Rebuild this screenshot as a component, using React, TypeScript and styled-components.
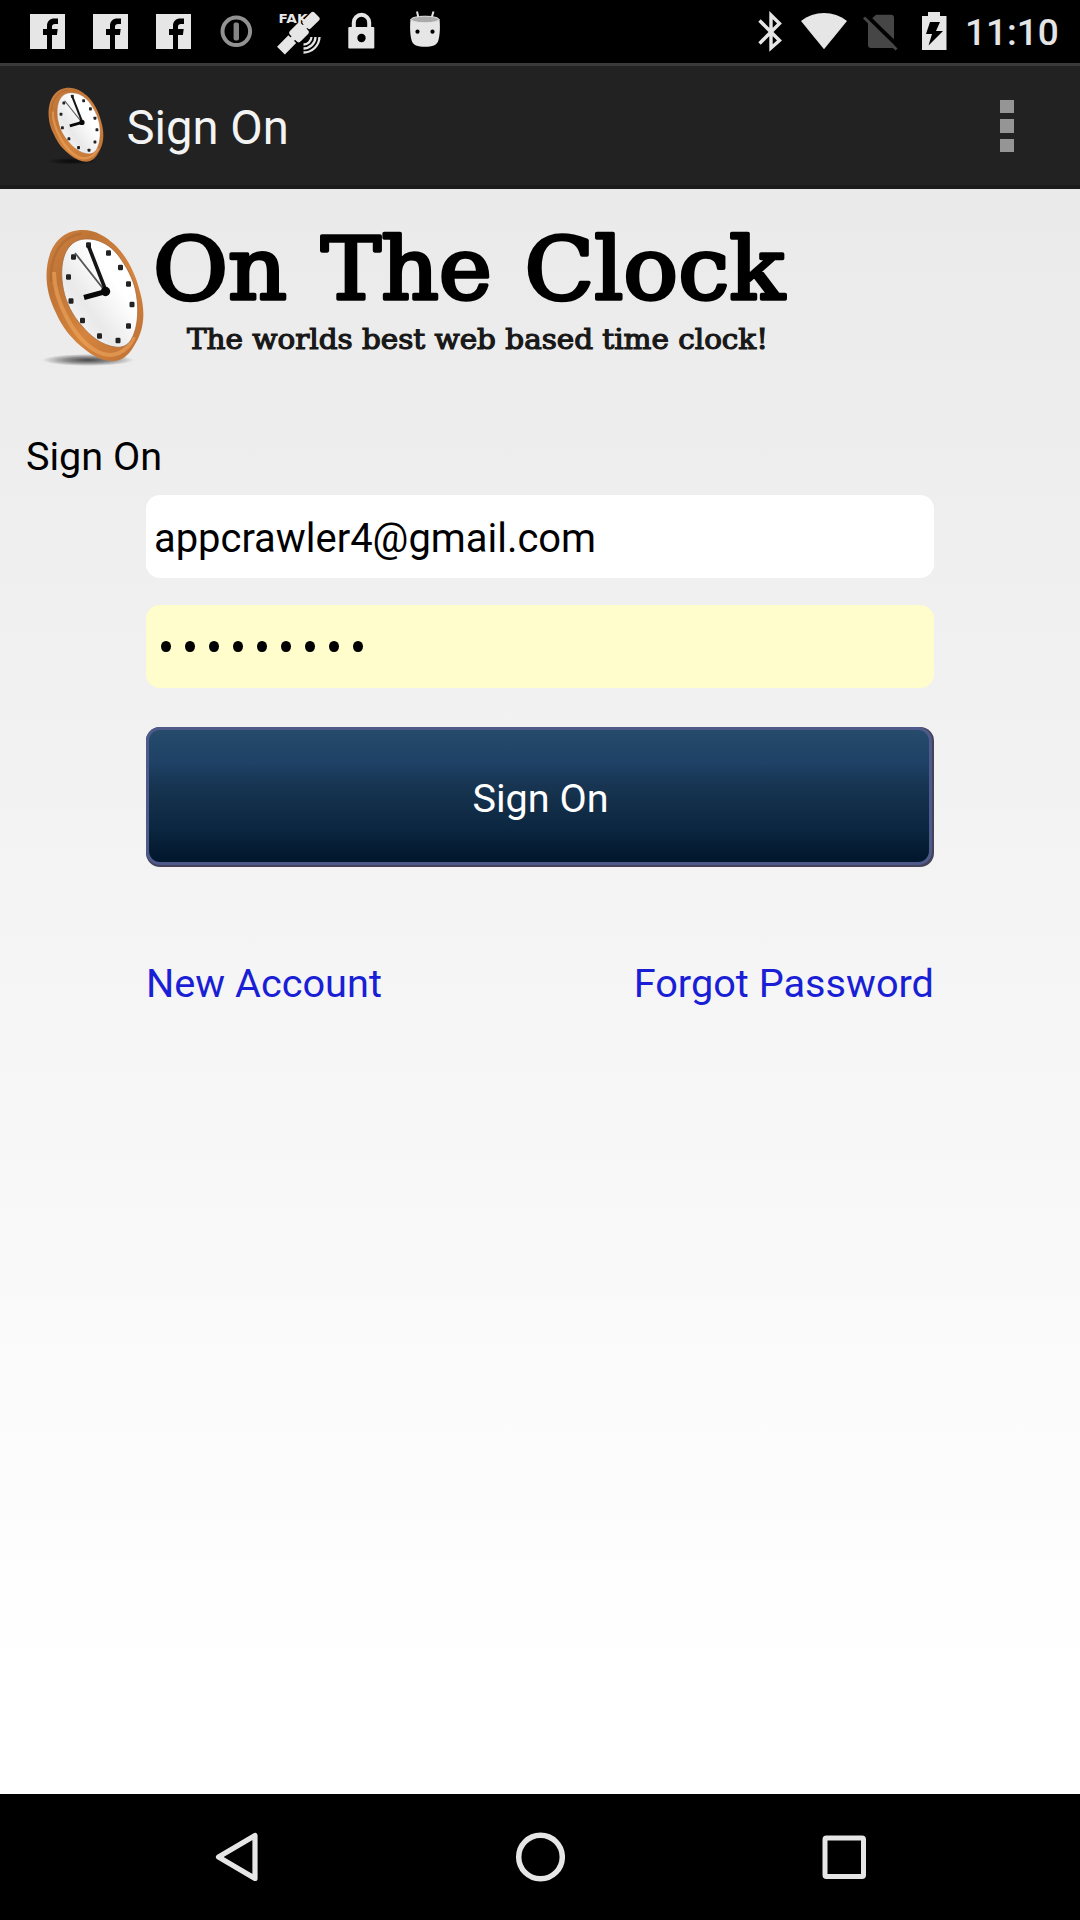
import React from "react";
import styled, { createGlobalStyle } from "styled-components";

const GlobalStyle = createGlobalStyle`
  * { box-sizing: border-box; }
  html, body { margin: 0; padding: 0; }
  body { font-family: Roboto, "Noto Sans", sans-serif; background: #000; }
`;

const Screen = styled.div`
  width: 1080px;
  height: 1920px;
  display: flex;
  flex-direction: column;
  overflow: hidden;
`;

const StatusBar = styled.header`
  height: 63px;
  flex: none;
  display: flex;
  justify-content: space-between;
  background: #000;
  padding: 0 20px 0 30px;
`;

const StatusGroup = styled.div`
  display: flex;
  align-items: flex-start;
`;

const Glyph = styled.svg<{ $gap?: number }>`
  display: block;
  flex: none;
  margin-left: ${(p) => p.$gap ?? 0}px;
`;

const Time = styled.span`
  width: 95px;
  margin-left: 18px;
  color: #e4e4e4;
  font-size: 37px;
  font-weight: 500;
  line-height: 43px;
  padding-top: 11px;
  white-space: nowrap;
`;

const ActionBar = styled.div`
  height: 126px;
  flex: none;
  display: flex;
  align-items: center;
  background: #222;
  border-top: 3px solid #393939;
  border-bottom: 4px solid #1b1b1b;
  padding: 0 66px 2px 46px;
`;

const Title = styled.h1`
  flex: 1;
  margin: 6px 0 0 20.6px;
  font-size: 47.2px;
  line-height: 56px;
  font-weight: 400;
  color: #f3f3f3;
`;

const Overflow = styled.button`
  display: grid;
  gap: 6px;
  padding: 0;
  border: 0;
  background: none;
  margin-top: 3px;
`;

const OverflowDot = styled.span`
  width: 14px;
  height: 13.5px;
  background: #959595;
`;

const Content = styled.main`
  flex: 1;
  min-height: 0;
  background: linear-gradient(#eaeaea, #ffffff 93%);
`;

const Brand = styled.div`
  height: 181px;
  padding-left: 40px;
`;

const SectionLabel = styled.div`
  margin-top: 63px;
  padding-left: 26px;
  height: 62px;
  font-size: 39.6px;
  line-height: 47px;
  color: #000;
`;

const Form = styled.form`
  width: 788px;
  margin: 0 auto;
  display: flex;
  flex-direction: column;
`;

const Field = styled.div<{ $filled?: boolean }>`
  height: 83px;
  margin-bottom: ${(p) => (p.$filled ? 39.5 : 26.5)}px;
  border-radius: 14px;
  background: ${(p) => (p.$filled ? "#fefdcb" : "#fff")};
  padding: 20px 8px 0 8px;
  font-size: 39.9px;
  line-height: 47px;
  color: #000;
`;

const MaskDots = styled.span`
  display: flex;
  padding: 16px 0 0 6.5px;
  gap: 14px;
`;

const MaskDot = styled.i`
  width: 10px;
  height: 11.5px;
  border-radius: 50%;
  background: #000;
`;

const SubmitFrame = styled.div`
  height: 140px;
  border-radius: 14px;
  padding: 0 2px 2px 0;
  background: #45435a;
`;

const Submit = styled.button`
  display: block;
  width: 100%;
  height: 138px;
  padding: 5px 0 0 3px;
  border: 3px solid #4d5a8a;
  border-radius: 14px;
  background: linear-gradient(#264b6b 0%, #1e4165 25%, #16334f 45%, #0b2640 75%, #02182e 97%);
  color: #fff;
  font: 400 39.6px Roboto, sans-serif;
`;

const Links = styled.nav`
  display: flex;
  justify-content: space-between;
  margin-top: 93px;
`;

const TextLink = styled.a`
  font-size: 39.7px;
  line-height: 47px;
  color: #1a1fd6;
`;

const NavBar = styled.footer`
  height: 126px;
  flex: none;
  background: #000;
  display: flex;
  justify-content: center;
  align-items: center;
  gap: 244px;
`;

const LIGHT = "#e6e6e6";

function Facebook({ gap }: { gap?: number }) {
  return (
    <Glyph $gap={gap} width="35" height="63" viewBox="0 0 35 63">
      <rect y="14" width="35" height="35" fill={LIGHT} />
      <path d="M17 49V35h-4v-6h4v-3c0-5 3-7.500 7.500-7.500H28V24h-3c-2 0-3 .8-3 2.700V29h5.700l-.8 6H22v14z" fill="#000" />
    </Glyph>
  );
}

const MARKS: [number, number][] = [
  [88.5, 35], [108.5, 43], [120.5, 57.5], [128.5, 74], [132, 94.5], [128.5, 116],
  [118, 130.5], [99.5, 126], [82.5, 110.5], [71, 91], [68.5, 67], [73.5, 47],
];

/* Tilted wall clock on a 150-unit canvas; the id keeps gradients distinct. */
function ClockArt({ id }: { id: string }) {
  return (
    <>
      <defs>
        <linearGradient id={id + "rim"} x1="0" y1="0" x2="1" y2="1">
          <stop offset="0" stopColor="#cf8443" />
          <stop offset=".25" stopColor="#bf7436" />
          <stop offset=".6" stopColor="#d5843e" />
          <stop offset="1" stopColor="#bd7033" />
        </linearGradient>
        <linearGradient id={id + "face"} x1="0" y1="1" x2="1" y2="0">
          <stop offset="0" stopColor="#fff" />
          <stop offset=".35" stopColor="#e9e9ea" />
          <stop offset=".65" stopColor="#fff" />
        </linearGradient>
        <radialGradient id={id + "shade"}>
          <stop offset="0" stopColor="#000" stopOpacity=".7" />
          <stop offset=".5" stopColor="#000" stopOpacity=".4" />
          <stop offset="1" stopColor="#000" stopOpacity="0" />
        </radialGradient>
      </defs>
      <ellipse cx="88" cy="150" rx="46" ry="6" fill={`url(#${id}shade)`} />
      <path d="M83 20C96 20 106 27 114 34C127 46 136 65 140 82C146 103 144 121 134 136C128 147 120 151 113 151C103 151 95 147 87 141C72 130 62 117 56 103C49 89 46.500 77 46.500 65C47 38 60 20 83 20Z" fill={`url(#${id}rim)`} />
      <path d="M51 72C50 44 62 26 82 23.500" fill="none" stroke="#a9632c" strokeWidth="2.500" opacity=".5" />
      <path d="M54 62C54 90 74 130 98 142C112 149 127 143 134 127" fill="none" stroke="#efa75e" strokeWidth="4" opacity=".6" />
      <path d="M85 29C99 28 111 36 118 45C127 57 133 69 135.500 80C139 95 139 117 131 130C127 136 122 138 115 137C102 135 91 127 82 116C72 105 66 92 63.500 80C58 53 65 30 85 29Z" fill={`url(#${id}face)`} stroke="#a86a38" strokeWidth=".8" />
      {MARKS.map(([x, y]) => (
        <rect key={x + "-" + y} x={x - 2.5} y={y - 2.7} width="5" height="5.4" rx="1.2" fill="#222" />
      ))}
      <path d="M75 43L105 81" stroke="#555" strokeWidth="1.800" />
      <path d="M88.500 36L106 81" stroke="#151515" strokeWidth="3.600" />
      <path d="M106 81.500L84 87.500" stroke="#080808" strokeWidth="5" />
      <circle cx="105.500" cy="81.500" r="4.700" fill="#080808" />
    </>
  );
}

function StatusIcons() {
  return (
    <StatusGroup>
      <Facebook />
      <Facebook gap={28} />
      <Facebook gap={28} />
      <Glyph $gap={29} width="33" height="63" viewBox="220 0 33 63">
        <circle cx="236.300" cy="31.300" r="13.800" fill="none" stroke="#929292" strokeWidth="4" />
        <rect x="233.600" y="22.500" width="5.400" height="18" rx="2" fill="#858585" />
      </Glyph>
      <Glyph $gap={23} width="46" height="63" viewBox="276 0 46 63">
        <text x="278.500" y="23" fill={LIGHT} fontFamily="DejaVu Sans, sans-serif" fontWeight="700" fontSize="13" textLength="29" lengthAdjust="spacingAndGlyphs">FAK</text>
        <g transform="translate(299 32.500) rotate(-45)" fill={LIGHT}>
          <rect x="-25.500" y="-5.500" width="16" height="11" />
          <rect x="-10" y="-2.500" width="20" height="5" />
          <rect x="9" y="-5.500" width="16" height="11" rx="2" />
          <rect x="-8" y="-7.500" width="16" height="15" rx="3" />
        </g>
        <g fill="none" stroke={LIGHT} strokeWidth="2.300">
          <path d="M311.500 37a8 8 0 0 1-8 7.500" />
          <path d="M315.500 37a12 12 0 0 1-12 11.500" />
          <path d="M319.500 37a16 16 0 0 1-16 15.500" />
        </g>
      </Glyph>
      <Glyph $gap={26} width="27" height="63" viewBox="348 0 27 63">
        <path d="M353.800 28v-5.500a7.700 7.700 0 0 1 15.400 0V28" fill="none" stroke={LIGHT} strokeWidth="4" />
        <rect x="348.300" y="27" width="26" height="21.500" rx="1" fill={LIGHT} />
        <circle cx="361.500" cy="38" r="4.200" fill="#000" />
      </Glyph>
      <Glyph $gap={35} width="31" height="63" viewBox="410 0 31 63">
        <path d="M418.500 18l-1.500-6.500M431.500 18l2-6.500" stroke={LIGHT} strokeWidth="2" />
        <path d="M410.500 19h29c.8 8 .4 15.500-1 21-1 5.500-6.500 6.700-13.500 6.700S412.500 45.500 411.500 40c-1.400-5.500-1.800-13-1-21z" fill={LIGHT} />
        <ellipse cx="425" cy="19.500" rx="14" ry="3.300" fill="#aaa" stroke={LIGHT} />
        <circle cx="417.500" cy="31.700" r="2.100" fill="#000" />
        <circle cx="432.500" cy="31.700" r="2.100" fill="#000" />
      </Glyph>
    </StatusGroup>
  );
}

function SystemIcons() {
  return (
    <StatusGroup>
      <Glyph width="25" height="63" viewBox="758 0 25 63">
        <path d="M759.500 20.500L779.500 40.500L771 48V15L779.500 23.500L759.500 43.500" fill="none" stroke={LIGHT} strokeWidth="3.400" />
      </Glyph>
      <Glyph $gap={18} width="46" height="63" viewBox="801 0 46 63">
        <path d="M801 21C814 10.300 834 10.300 847 21L824 49.300Z" fill={LIGHT} />
      </Glyph>
      <Glyph $gap={16} width="35" height="63" viewBox="863 0 35 63">
        <path d="M868 22L876 14.700H891c2 0 3 1 3 3V45l-1 3H871c-2 0-3-1-3-3z" fill="#464646" />
        <path d="M866 15L899 47" stroke="#000" strokeWidth="4" />
        <path d="M864 17.500L896.500 49.500" stroke="#464646" strokeWidth="3" />
      </Glyph>
      <Glyph $gap={24} width="25" height="63" viewBox="922 0 25 63">
        <path d="M922 16h6v-4h12v4h6.500v34H922z" fill={LIGHT} />
        <path d="M930 22h10l-4 9h7L928.500 45.500L932 34h-6z" fill="#000" />
      </Glyph>
      <Time>11:10</Time>
    </StatusGroup>
  );
}

export default function App() {
  return (
    <Screen>
      <GlobalStyle />
      <StatusBar>
        <StatusIcons />
        <SystemIcons />
      </StatusBar>
      <ActionBar>
        <Glyph width="60" height="78" viewBox="42 17 106 138" preserveAspectRatio="none">
          <ClockArt id="bar" />
        </Glyph>
        <Title>Sign On</Title>
        <Overflow aria-label="More options">
          <OverflowDot />
          <OverflowDot />
          <OverflowDot />
        </Overflow>
      </ActionBar>
      <Content>
        <Brand>
          <Glyph width="760" height="181" viewBox="40 189 760 181">
            <g transform="translate(0 210)">
              <ClockArt id="brand" />
            </g>
            <g fontFamily="DejaVu Serif, serif" fontSize="86" fill="#000" stroke="#000" strokeWidth="3.600" strokeLinejoin="round">
              <text x="153" y="298.700" textLength="134" lengthAdjust="spacingAndGlyphs">On</text>
              <text x="321" y="298.700" textLength="171" lengthAdjust="spacingAndGlyphs">The</text>
              <text x="524.500" y="298.700" textLength="260" lengthAdjust="spacingAndGlyphs">Clock</text>
            </g>
            <text x="187" y="348.500" fontFamily="DejaVu Serif, serif" fontSize="27.500" fill="#181818" stroke="#181818" strokeWidth="1.200" textLength="581" lengthAdjust="spacingAndGlyphs">
              The worlds best web based time clock!
            </text>
          </Glyph>
        </Brand>
        <SectionLabel>Sign On</SectionLabel>
        <Form>
          <Field>appcrawler4@gmail.com</Field>
          <Field $filled>
            <MaskDots>
              {Array.from({ length: 9 }, (_, i) => (
                <MaskDot key={i} />
              ))}
            </MaskDots>
          </Field>
          <SubmitFrame>
            <Submit type="button">Sign On</Submit>
          </SubmitFrame>
          <Links>
            <TextLink>New Account</TextLink>
            <TextLink>Forgot Password</TextLink>
          </Links>
        </Form>
      </Content>
      <NavBar>
        <Glyph width="68" height="68" viewBox="203 1823 68 68">
          <path d="M218.500 1857L255 1835.500V1878.500Z" fill="none" stroke={LIGHT} strokeWidth="5.200" strokeLinejoin="round" />
        </Glyph>
        <Glyph width="50" height="50" viewBox="0 0 50 50">
          <circle cx="25.500" cy="25" r="21.800" fill="none" stroke={LIGHT} strokeWidth="5.500" />
        </Glyph>
        <Glyph width="68" height="50" viewBox="0 0 68 50">
          <rect x="16" y="6" width="38.500" height="38.500" rx="1.500" fill="none" stroke={LIGHT} strokeWidth="5" />
        </Glyph>
      </NavBar>
    </Screen>
  );
}
